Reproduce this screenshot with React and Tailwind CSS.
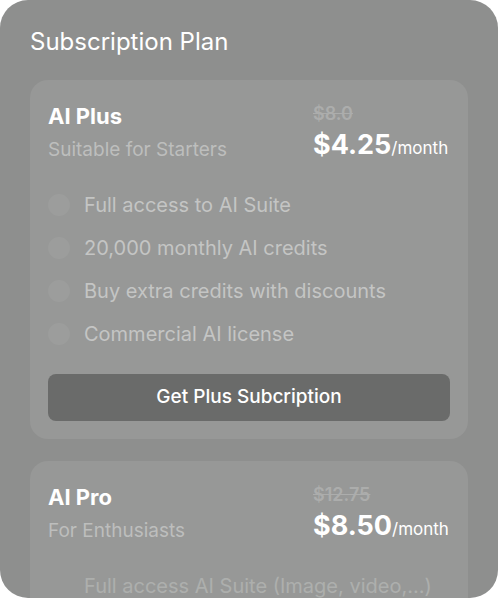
import React from 'react';

const plans = [
  {
    name: 'AI Plus',
    tagline: 'Suitable for Starters',
    oldPrice: '$8.0',
    price: '$4.25',
    features: [
      'Full access to AI Suite',
      '20,000 monthly AI credits',
      'Buy extra credits with discounts',
      'Commercial AI license',
    ],
    cta: 'Get Plus Subcription',
  },
  {
    name: 'AI Pro',
    tagline: 'For Enthusiasts',
    oldPrice: '$12.75',
    price: '$8.50',
    features: ['Full access AI Suite (Image, video,...)'],
    cta: 'Get Pro Subcription',
  },
];

const PlanCard = ({ plan, faded }) => (
  <div className="bg-[#979897] rounded-[18px] px-[18px] pt-[22px] pb-[18px] shrink-0">
    <div className="flex justify-between">
      <div className="flex flex-col">
        <h2 className="text-[22px] leading-[28px] font-bold text-white">{plan.name}</h2>
        <p className="text-[19px] leading-[24px] mt-[8px] text-[#bdbebd]">{plan.tagline}</p>
      </div>
      <div className="flex flex-col w-[137px]">
        <span className="text-[18px] leading-[24px] font-semibold text-[#acadac] line-through">{plan.oldPrice}</span>
        <span className="mt-[2px] leading-[34px] text-white whitespace-nowrap">
          <span className="text-[27px] font-bold">{plan.price}</span>
          <span className="text-[17px]">/month</span>
        </span>
      </div>
    </div>
    <ul className={`mt-[28px] flex flex-col gap-[20px] ${faded ? 'opacity-50' : ''}`}>
      {plan.features.map(f => (
        <li key={f} className="flex items-center gap-[14px] h-[23px]">
          {!faded && <span className="w-[22px] h-[22px] rounded-full bg-[#9c9d9c] shrink-0"></span>}
          {faded && <span className="w-[22px] h-[22px] shrink-0"></span>}
          <span className="text-[20px] text-[#c4c5c4] whitespace-nowrap">{f}</span>
        </li>
      ))}
    </ul>
    <button className="mt-[29px] w-full h-[47px] rounded-[8px] bg-[#6a6b6a] text-white text-[19px] font-medium">
      {plan.cta}
    </button>
  </div>
);

const App = () => {
  return (
    <div className="w-[498px] h-[600px] bg-white" style={{ fontFamily: 'Inter, "Noto Sans", sans-serif' }}>
      <div className="h-[598px] bg-[#8e8f8e] rounded-[28px] overflow-hidden px-[30px] pt-[27px] flex flex-col">
        <h1 className="text-[24px] leading-[30px] text-white">Subscription Plan</h1>
        <div className="mt-[23px] flex flex-col gap-[22px]">
          <PlanCard plan={plans[0]} />
          <PlanCard plan={plans[1]} faded />
        </div>
      </div>
    </div>
  );
};

export default App;
